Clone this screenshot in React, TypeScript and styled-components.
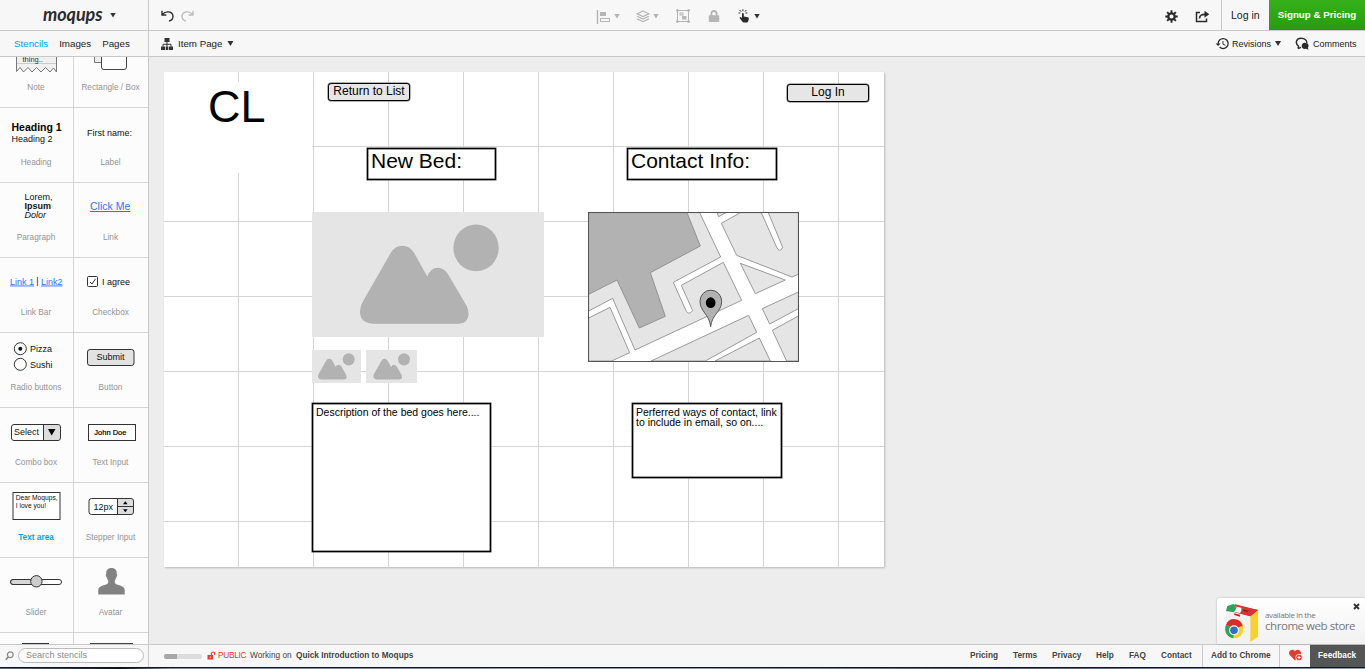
import React from 'react';
import styled, { createGlobalStyle } from 'styled-components';
import { FaLock, FaHeart } from 'react-icons/fa';
import { MdHistory } from 'react-icons/md';

const GlobalStyle = createGlobalStyle`
  * { box-sizing: border-box; }
  html, body { margin: 0; padding: 0; overflow: hidden; }
  body { font-family: "Liberation Sans", Arial, sans-serif; color: #333; }
`;

const line = '#c9c9c9';

const Screen = styled.div`
  width: 1365px;
  height: 669px;
  display: flex;
  flex-direction: column;
  background: #ededed;
  overflow: hidden;
  white-space: nowrap;
`;

const Bar = styled.header<{ $h: number }>`
  display: flex;
  flex: none;
  height: ${p => p.$h}px;
  background: #f7f7f7;
  border-bottom: 1px solid ${line};
`;

const SideCell = styled.div<{ $left: number; $gap?: number; $pb?: number }>`
  width: 149px;
  flex: none;
  display: flex;
  align-items: center;
  padding: 0 0 ${p => p.$pb ?? 0}px ${p => p.$left}px;
  gap: ${p => p.$gap ?? 0}px;
  border-right: 1px solid ${line};
`;

const Logo = styled.span`
  font-family: Lato, sans-serif;
  font-style: italic;
  font-weight: 700;
  font-size: 18px;
  line-height: 20px;
  letter-spacing: -0.05px;
  width: 67px;
  margin-top: -3px;
  color: #2b2b2b;
`;

const Caret = styled.i<{ $color?: string; $ml?: number }>`
  width: 6px;
  height: 5px;
  flex: none;
  margin-left: ${p => p.$ml ?? 0}px;
  background: ${p => p.$color ?? '#333'};
  clip-path: polygon(0 0, 100% 0, 50% 100%);
`;

const Tab = styled.span<{ $active?: boolean }>`
  font-size: 9.75px;
  color: ${p => (p.$active ? '#00a1df' : '#222')};
`;

const BarBody = styled.div<{ $left: number; $pb?: number }>`
  flex: 1;
  display: flex;
  align-items: center;
  padding: 0 0 ${p => p.$pb ?? 0}px ${p => p.$left}px;
`;

const Slot = styled.span<{ $w: number }>`
  width: ${p => p.$w}px;
  flex: none;
  display: flex;
  align-items: center;
`;

const ToolSlot = styled(Slot)`
  margin-top: 2px;
`;

const Spacer = styled.span`
  flex: 1;
`;

const Label = styled.span<{ $size: number; $ml?: number; $bold?: boolean; $color?: string; $track?: number }>`
  font-size: ${p => p.$size}px;
  margin-left: ${p => p.$ml ?? 0}px;
  font-weight: ${p => (p.$bold ? 700 : 400)};
  color: ${p => p.$color ?? '#222'};
  letter-spacing: ${p => p.$track ?? 0}px;
`;

const LoginCell = styled.div`
  width: 48px;
  height: 30px;
  display: flex;
  align-items: center;
  padding-left: 9px;
  border-left: 1px solid ${line};
  font-size: 10.5px;
  color: #222;
`;

const SignupButton = styled.div`
  width: 96px;
  height: 30px;
  display: flex;
  align-items: center;
  justify-content: center;
  padding-bottom: 2px;
  background: linear-gradient(#35b11a, #289b0e);
  color: #fff;
  font-size: 9.75px;
  font-weight: 700;
`;

const Main = styled.main`
  flex: none;
  height: 587px;
  display: flex;
`;

const Stencils = styled.aside`
  width: 149px;
  flex: none;
  border-right: 1px solid ${line};
  background: #fcfcfc;
  overflow: hidden;
`;

const StencilGrid = styled.div`
  display: grid;
  grid-template-columns: 74px 74px;
  grid-auto-rows: 75px;
  margin-top: -24px;
`;

const StencilCell = styled.div<{ $first: boolean }>`
  display: flex;
  flex-direction: column;
  border-bottom: 1px solid #d6d6d6;
  border-right: ${p => (p.$first ? '1px solid #d6d6d6' : '0')};
  svg {
    display: block;
    flex: none;
    overflow: visible;
  }
`;

const Caption = styled.span<{ $active?: boolean }>`
  font-size: 8.25px;
  line-height: 12px;
  margin-top: 4px;
  padding-right: 1px;
  text-align: center;
  font-weight: ${p => (p.$active ? 700 : 400)};
  color: ${p => (p.$active ? '#00a8e1' : '#949494')};
`;

const Workspace = styled.section`
  flex: 1;
  position: relative;
  padding: 15px;
`;

const Sheet = styled.div`
  position: relative;
  width: 720px;
  height: 495px;
  background-color: #fff;
  background-image: linear-gradient(to right, transparent 74px, #d5d5d5 74px),
    linear-gradient(to bottom, transparent 74px, #d5d5d5 74px);
  background-size: 75px 75px;
  box-shadow: 1px 1px 2px rgba(0, 0, 0, 0.22);
`;

/* An item dropped on the free canvas, placed by its own coordinates. */
const Item = styled.div<{ $x: number; $y: number; $w: number; $h: number }>`
  position: absolute;
  left: ${p => p.$x}px;
  top: ${p => p.$y}px;
  width: ${p => p.$w}px;
  height: ${p => p.$h}px;
  color: #000;
  svg { display: block; }
`;

const TitleItem = styled(Item)`
  background: #fff;
  font-size: 45px;
  line-height: 49px;
  padding-left: 44px;
`;

const ButtonItem = styled(Item)`
  background: #e6e6e6;
  border: 1.5px solid #000;
  box-shadow: 0 0 0 0.5px rgba(0, 0, 0, 0.6);
  border-radius: 3px;
  font-size: 12px;
  line-height: 15px;
  text-align: center;
`;

const BoxItem = styled(Item)<{ $size: number; $lh: number }>`
  background: #fff;
  border: 1px solid #000;
  box-shadow: inset 0 0 0 0.5px #444, 0 0 0 0.5px #444;
  font-size: ${p => p.$size}px;
  line-height: ${p => p.$lh}px;
  padding: 3px 0 0 3px;
  white-space: pre;
`;

const Promo = styled.div`
  position: absolute;
  right: 0;
  bottom: 0;
  width: 148px;
  height: 46px;
  display: flex;
  padding: 5px 0 0 8px;
  background: linear-gradient(#fff, #f1f1f1);
  border-radius: 3px 0 0 0;
  box-shadow: 0 0 2px rgba(0, 0, 0, 0.3);
  font-family: "Open Sans", sans-serif;
  color: #777;
`;

const PromoText = styled.div`
  display: flex;
  flex-direction: column;
  padding: 6px 0 0 6px;
`;

const PromoLine = styled.span<{ $size: number; $lh: number; $track: number }>`
  font-size: ${p => p.$size}px;
  line-height: ${p => p.$lh}px;
  letter-spacing: ${p => p.$track}px;
`;

const CloseMark = styled.div`
  position: absolute;
  right: 5px;
  top: 5px;
  svg { display: block; }
`;

const Footer = styled.footer`
  flex: none;
  height: 23px;
  display: flex;
  align-items: stretch;
  background: #f7f7f7;
  border-top: 1px solid ${line};
`;

const SearchBox = styled.div`
  width: 126px;
  height: 15px;
  margin-left: 4px;
  padding-left: 7px;
  border: 1px solid #bbb;
  border-radius: 8px;
  background: #fff;
  font-size: 9px;
  line-height: 13px;
  color: #8a8a8a;
`;

const Progress = styled.span`
  width: 38px;
  height: 5px;
  margin-top: 2px;
  border-radius: 2px;
  background: linear-gradient(to right, #a8a8a8 13px, #dcdcdc 13px);
`;

const FooterCell = styled.span<{ $w: number; $pl?: number; $line?: boolean; $dark?: boolean }>`
  width: ${p => p.$w}px;
  display: flex;
  align-items: center;
  padding: 0 0 2px ${p => p.$pl ?? 0}px;
  font-size: 8.25px;
  font-weight: 700;
  color: ${p => (p.$dark ? '#fff' : '#444')};
  background: ${p => (p.$dark ? '#555' : 'transparent')};
  border-left: ${p => (p.$line ? `1px solid ${line}` : '0')};
`;

const DesktopEdge = styled.div`
  height: 2px;
  flex: none;
  border-top: 1px solid #10141c;
  background: linear-gradient(to right, #5b6f8c, #0c0f16 120px, #7d8ca3 170px, #8798ae 700px, #4d5f7a 1000px, #8c9cb2);
`;

const ink = { stroke: '#333', strokeWidth: 1, fill: 'none' } as const;
const sm = { fontSize: 9, fill: '#111' } as const;
const linkBlue = '#2f74ee';

interface Stencil {
  name?: string;
  active?: boolean;
  art: React.ReactNode;
}

const stencils: Stencil[] = [
  {
    name: 'Note',
    art: (
      <>
        <path d="M16.5 0V38.500L20 34.500L23.500 39L28 34.500L32 39L36.500 34.500L41 39L45.500 34.500L50 39L53.500 35L56.500 39V0Z" fill="#f0f0f0" stroke="#777" />
        <path d="M17 30.500H56" stroke="#ccc" />
        <text x="22.500" y="29" fontSize="7.500" fill="#333">thing..</text>
      </>
    ),
  },
  {
    name: 'Rectangle / Box',
    art: (
      <>
        <path d="M20.500 0V29.500H30V0Z" fill="#eee" stroke="#777" />
        <rect x="27.500" y="10" width="25" height="26.500" rx="2.500" fill="#fff" stroke="#444" />
      </>
    ),
  },
  {
    name: 'Heading',
    art: (
      <>
        <text x="11.500" y="23" fontSize="10.500" fontWeight="700" fill="#000">Heading 1</text>
        <text x="11.500" y="33.500" {...sm}>Heading 2</text>
      </>
    ),
  },
  { name: 'Label', art: <text x="13" y="27.500" {...sm}>First name:</text> },
  {
    name: 'Paragraph',
    art: (
      <>
        <text x="24.500" y="17" {...sm}>Lorem,</text>
        <text x="24.500" y="26" {...sm} fontWeight="700">Ipsum</text>
        <text x="24.500" y="35" {...sm} fontStyle="italic">Dolor</text>
      </>
    ),
  },
  { name: 'Link', art: <text x="16" y="27" fontSize="10.500" fill={linkBlue} textDecoration="underline">Click Me</text> },
  {
    name: 'Link Bar',
    art: (
      <>
        <text x="10" y="26.500" fontSize="9" fill={linkBlue} textDecoration="underline">Link 1</text>
        <text x="36.300" y="26" {...sm}>|</text>
        <text x="41" y="26.500" fontSize="9" fill={linkBlue} textDecoration="underline">Link2</text>
      </>
    ),
  },
  {
    name: 'Checkbox',
    art: (
      <>
        <rect x="13.500" y="18.500" width="10" height="10" rx="1" {...ink} fill="#fff" />
        <path d="M16 24L18 26L21.500 20.800" {...ink} />
        <text x="28" y="27" {...sm}>I agree</text>
      </>
    ),
  },
  {
    name: 'Radio buttons',
    art: (
      <>
        <circle cx="20.300" cy="15.700" r="6" {...ink} fill="#fff" />
        <circle cx="20.300" cy="15.700" r="2" fill="#111" />
        <circle cx="20.300" cy="31.300" r="6" {...ink} fill="#fff" />
        <text x="30" y="19" {...sm}>Pizza</text>
        <text x="30" y="34.700" {...sm}>Sushi</text>
      </>
    ),
  },
  {
    name: 'Button',
    art: (
      <>
        <rect x="13.500" y="16.500" width="46.500" height="16" rx="2.500" {...ink} fill="#e2e2e2" />
        <text x="22.500" y="27" {...sm}>Submit</text>
      </>
    ),
  },
  {
    name: 'Combo box',
    art: (
      <>
        <rect x="11.500" y="16.500" width="49" height="16" rx="2.500" fill="#fff" />
        <path d="M43.500 16.500H58L60.500 19V30L58 32.500H43.500Z" fill="#ddd" />
        <rect x="11.500" y="16.500" width="49" height="16" rx="2.500" {...ink} />
        <path d="M43.500 16.500V32.500" {...ink} />
        <text x="14" y="27" {...sm}>Select</text>
        <path d="M48 21H55.500L51.700 27.500Z" fill="#000" />
      </>
    ),
  },
  {
    name: 'Text Input',
    art: (
      <>
        <rect x="14.500" y="16.500" width="47" height="16" {...ink} fill="#fff" />
        <text x="20.300" y="27" fontSize="7.500" fill="#000" stroke="#000" strokeWidth=".2">John Doe</text>
      </>
    ),
  },
  {
    name: 'Text area',
    active: true,
    art: (
      <>
        <rect x="13" y="9.500" width="47" height="27" {...ink} fill="#fff" />
        <text x="15.700" y="17" fontSize="6.700" fill="#111">Dear Moqups,</text>
        <text x="15.700" y="25" fontSize="6.700" fill="#111">I love you!</text>
      </>
    ),
  },
  {
    name: 'Stepper Input',
    art: (
      <>
        <rect x="15" y="15.500" width="44.500" height="16" rx="2.500" fill="#fff" />
        <path d="M43.500 15.500H57L59.500 18V29L57 31.500H43.500Z" fill="#ddd" />
        <rect x="15" y="15.500" width="44.500" height="16" rx="2.500" {...ink} />
        <path d="M43.500 15.500V31.500M43.500 23.500H59.500" {...ink} />
        <text x="19.500" y="26.500" {...sm}>12px</text>
        <path d="M49 21.200H53.600L51.300 18.200ZM49 26.200H53.600L51.300 29.200Z" fill="#000" />
      </>
    ),
  },
  {
    name: 'Slider',
    art: (
      <>
        <rect x="10.500" y="21.500" width="51" height="5" rx="2.500" {...ink} fill="#fff" />
        <path d="M13 21.500H36V26.500H13Q10.500 26 10.500 24T13 21.500Z" {...ink} fill="#d6d6d6" />
        <circle cx="36.400" cy="23.300" r="5.700" {...ink} fill="#ccc" />
      </>
    ),
  },
  {
    name: 'Avatar',
    art: (
      <path
        d="M37.500 10C41.500 10 43 12.500 42.700 16C43.800 16.500 43 19 42.200 19.500C41.800 21 41.300 21.800 40.800 22.400V25C42 27.500 50.700 27 50.700 32V36.500H24.300V32C24.300 27 33 27.500 34.200 25V22.400C33.700 21.800 33.200 21 32.800 19.500C32 19 31.200 16.500 32.300 16C32 12.500 33.500 10 37.500 10Z"
        fill="#828282"
      />
    ),
  },
  { art: <rect x="22.500" y="10.500" width="26" height="20" {...ink} /> },
  { art: <rect x="16" y="10" width="43" height="20" fill="#444" /> },
];

const scenery = (
  <>
    <path
      d="M272 160Q285 138 307 138Q329 138 343 160L382 230Q393 204 413 204Q432 204 444 223L500 318Q506 330 506 345Q504 370 478 372H222Q180 370 180 335Q180 320 190 303Z"
      fill="#b2b2b2"
    />
    <ellipse cx="528.500" cy="144.500" rx="68" ry="70" fill="#b2b2b2" />
  </>
);

const Placeholder = ({ w, h, view }: { w: number; h: number; view: string }) => (
  <svg width={w} height={h} viewBox={view} preserveAspectRatio="none">
    <rect x="-10" y="-10" width="900" height="900" fill="#e5e5e5" />
    {scenery}
  </svg>
);

const StreetMap = () => (
  <svg width="211" height="150" viewBox="24 426 633 450">
    <rect x="25.500" y="427.500" width="630" height="446" fill="#fff" />
    <g fill="#e5e5e5" stroke="#888" strokeWidth="2.500">
      <path d="M26 428H359L422 561L280 637L319 724Q327 736 338 722L304 646L430 577L485 691L165 840L98 685L26 723Z" />
      <path d="M26 744L90 712L149 848L95 873H26Z" />
      <path d="M213 873L506 736L530 787L376 873Z" />
      <path d="M405 873L538 804L571 873Z" />
      <path d="M411 428L416 440L438 428Z" />
      <path d="M424 460L481 428H544L590 532Q600 550 608 532L565 428H655V613L636 621L470 556Z" />
      <path d="M481 580L616 630L526 671Z" />
      <path d="M547 716L655 666V716L569 762Z" />
      <path d="M577 781L655 738V873H620Z" />
      <path d="M26 428H321L361 528L211 608L256 739L178 774L111 630L26 673Z" fill="#b2b2b2" />
    </g>
    <path d="M392 770C388 732 360 725 360 694A32 33 0 0 1 425 694C425 725 396 732 392 770Z" fill="#b2b2b2" stroke="#555" strokeWidth="3" />
    <ellipse cx="392" cy="698" rx="14.500" ry="16" fill="#000" />
    <rect x="25.500" y="427.500" width="630" height="447" fill="none" stroke="#555" strokeWidth="3" />
  </svg>
);

const TurnArrow = ({ color, flip }: { color: string; flip?: boolean }) => (
  <svg width="13" height="12" viewBox="482 30 39 36" fill="none" stroke={color} strokeWidth="4">
    <g transform={flip ? 'translate(1003 0) scale(-1 1)' : undefined}>
      <path d="M485 32V45H498M486 43C496 32 517 33 518 49C518 57 513 62 506 63" />
    </g>
  </svg>
);

const AlignIcon = () => (
  <svg width="14" height="15" viewBox="0 0 14 15">
    <path d="M1.500 1V15" stroke="#b5b5b5" strokeWidth="1.500" />
    <rect x="4" y="3" width="6" height="4" fill="#b5b5b5" />
    <rect x="4.500" y="9.500" width="9" height="3" fill="none" stroke="#b5b5b5" />
  </svg>
);

const LayersIcon = () => (
  <svg width="14" height="13" viewBox="0 0 14 13" fill="none" stroke="#b5b5b5" strokeWidth="1.200">
    <path d="M7 1L12.800 3.800L7 6.600L1.200 3.800ZM1.200 6.300L7 9.100L12.800 6.300M1.200 8.900L7 11.700L12.800 8.900" />
  </svg>
);

const GroupIcon = () => (
  <svg width="14" height="14" viewBox="0 0 14 14" fill="none" stroke="#b5b5b5">
    <rect x="1.500" y="1.500" width="11" height="11" />
    <path d="M0 1.500H3M1.500 0V3M11 1.500H14M12.500 0V3M0 12.500H3M1.500 11V14M11 12.500H14M12.500 11V14" strokeWidth="1.400" />
    <rect x="4" y="4" width="3" height="2" />
    <rect x="6.500" y="7.500" width="3.500" height="2.500" fill="#b5b5b5" />
  </svg>
);

const TapIcon = () => (
  <svg width="12" height="14" viewBox="0 0 12 14">
    <path d="M4 4.500Q5 3.500 5.800 4.500V7.500L10 8.200Q11 8.500 10.800 10L10.300 12Q10 13.500 8.500 13.500H5.500Q4.300 13 3.500 11.500L1.600 9Q1.500 8 2.600 8L4 9Z" fill="#2b2b2b" />
    <path d="M0.500 4H2.300M1.500 1L3 2.600M4.900 0.300V2.200M8.300 1L7 2.600M9.300 4H7.500" stroke="#2b2b2b" fill="none" />
  </svg>
);

const GearIcon = () => (
  <svg width="13" height="13" viewBox="-6.5 -6.5 13 13" fill="none" stroke="#2b2b2b">
    <circle r="3.200" strokeWidth="2.300" />
    <path d="M0 -6.200V-3.500M0 6.200V3.500M-6.200 0H-3.500M6.200 0H3.500M-4.400 -4.400L-2.600 -2.600M4.400 4.400L2.600 2.600M-4.400 4.400L-2.600 2.600M4.400 -4.400L2.600 -2.600" strokeWidth="1.900" />
  </svg>
);

const ShareIcon = () => (
  <svg width="15" height="13" viewBox="0 0 15 13" fill="none" stroke="#2b2b2b" strokeWidth="1.500">
    <path d="M5 2.500H1.500V11.500H11.500V8.500" />
    <path d="M4.500 8.500C4.800 5 6.500 4.300 10 4.300" strokeWidth="1.700" />
    <path d="M9.500 0.800L14.300 4.300L9.500 7.800Z" fill="#2b2b2b" stroke="none" />
  </svg>
);

const SitemapIcon = () => (
  <svg width="12" height="12" viewBox="0 0 12 12">
    <path d="M3.500 0H8.500V4H3.500ZM0 8.500H4V12H0ZM8 8.500H12V12H8ZM4.700 8.500H7.300V12H4.700Z" fill="#333" />
    <path d="M6 4V8.500M2 8.500V6.300H10V8.500" stroke="#333" fill="none" />
  </svg>
);

const CommentsIcon = () => (
  <svg width="15" height="14" viewBox="0 0 15 14">
    <path d="M3 11.500L3.600 9.200C-0.500 6 1.500 1.200 6 1.200C10 1.200 12 3.500 11.800 6" fill="none" stroke="#2b2b2b" strokeWidth="1.400" />
    <path d="M3 11.700L6 10.300" stroke="#2b2b2b" strokeWidth="1.300" />
    <path d="M9.800 5.800C13.500 5.800 14.500 9 12.900 10.700L13.500 12.800L11 11.800C8 12.300 6.500 10.500 6.700 8.700C6.900 7 8 5.800 9.800 5.800Z" fill="#2b2b2b" />
  </svg>
);

const SearchIcon = () => (
  <svg width="9" height="10" viewBox="0 0 9 10" fill="none" stroke="#888">
    <circle cx="5.300" cy="3.800" r="2.900" strokeWidth="1.200" />
    <path d="M3.200 6L0.800 8.800" strokeWidth="1.700" />
  </svg>
);

const OpenLockIcon = () => (
  <svg width="9" height="9" viewBox="0 0 9 9">
    <rect x="0.500" y="4" width="5.500" height="4.500" fill="#e23c2c" />
    <path d="M4.500 4V2.500Q4.700 1 6.200 1Q7.700 1 7.700 2.500V4" fill="none" stroke="#e23c2c" strokeWidth="1.200" />
    <path d="M3.200 5.500V7" stroke="#fff" strokeWidth=".8" />
  </svg>
);

const StoreBox = () => (
  <svg width="34" height="40" viewBox="225 38 102 120">
    <path d="M228 60L301 78V155L228 134Z" fill="#f1f1f1" />
    <path d="M301 78L324 60V139L301 155Z" fill="#fbd02c" />
    <path d="M228 62L232 47L250 41L262 47L252 66Z" fill="#2aa55a" />
    <path d="M243 43L324 59L301 78L252 66L264 52Z" fill="#d63434" />
    <path d="M250 44L282 51L270 68L252 65L262 52Z" fill="#f7f7f7" />
    <path d="M274 53L324 59L301 78L275 70Z" fill="#d63434" />
    <path d="M256 42L324 59L312 62L252 47Z" fill="#d63434" />
    <path d="M281 58L296 61L292 64L278 61Z" fill="#8e1515" />
    <path d="M253 69L270 73V79L253 74Z" fill="#c62323" />
    <g transform="translate(253 115)">
      <ellipse rx="27" ry="29" fill="#fbd02c" />
      <path d="M0 0L-25 -12A27 29 0 0 1 25 -9Z" fill="#d92b2b" />
      <path d="M0 0L-25 -12A27 29 0 0 0 -3 29Z" fill="#2aa55a" />
      <circle cx="-1" cy="5" r="15" fill="#fff" />
      <circle cx="-1" cy="5" r="11.500" fill="#2f6fc4" />
    </g>
  </svg>
);

const footerLinks: [string, number][] = [
  ['Pricing', 43],
  ['Terms', 39],
  ['Privacy', 44],
  ['Help', 33],
  ['FAQ', 32],
  ['Contact', 41],
];

export default function App() {
  return (
    <>
      <GlobalStyle />
      <Screen>
        <Bar $h={31}>
          <SideCell $left={43}>
            <Logo>moqups</Logo>
            <Caret />
          </SideCell>
          <BarBody $left={12}>
            <ToolSlot $w={20}><TurnArrow color="#2b2b2b" /></ToolSlot>
            <ToolSlot $w={415}><TurnArrow color="#bdbdbd" flip /></ToolSlot>
            <ToolSlot $w={40}><AlignIcon /><Caret $color="#b5b5b5" $ml={4} /></ToolSlot>
            <ToolSlot $w={40}><LayersIcon /><Caret $color="#b5b5b5" $ml={3} /></ToolSlot>
            <ToolSlot $w={32}><GroupIcon /></ToolSlot>
            <ToolSlot $w={30}><FaLock size={12} color="#b5b5b5" /></ToolSlot>
            <ToolSlot $w={30}><TapIcon /><Caret $ml={4} /></ToolSlot>
            <Spacer />
            <ToolSlot $w={30}><GearIcon /></ToolSlot>
            <ToolSlot $w={26}><ShareIcon /></ToolSlot>
            <LoginCell>Log in</LoginCell>
            <SignupButton>Signup &amp; Pricing</SignupButton>
          </BarBody>
        </Bar>
        <Bar $h={26}>
          <SideCell $left={14} $gap={11}>
            <Tab $active>Stencils</Tab>
            <Tab>Images</Tab>
            <Tab>Pages</Tab>
          </SideCell>
          <BarBody $left={12}>
            <SitemapIcon />
            <Label $size={9.75} $ml={5}>Item Page</Label>
            <Caret $ml={5} />
            <Spacer />
            <Slot $w={80}>
              <MdHistory size={15} color="#2b2b2b" />
              <Label $size={9} $ml={2}>Revisions</Label>
              <Caret $ml={4} />
            </Slot>
            <Slot $w={70}>
              <CommentsIcon />
              <Label $size={9} $ml={3}>Comments</Label>
            </Slot>
          </BarBody>
        </Bar>
        <Main>
          <Stencils>
            <StencilGrid>
              {stencils.map((s, i) => (
                <StencilCell key={i} $first={i % 2 === 0}>
                  <svg width="73" height="45">{s.art}</svg>
                  {s.name && <Caption $active={s.active}>{s.name}</Caption>}
                </StencilCell>
              ))}
            </StencilGrid>
          </Stencils>
          <Workspace>
            <Sheet>
              <TitleItem $x={0} $y={10} $w={148} $h={91}>CL</TitleItem>
              <ButtonItem $x={164} $y={11} $w={82} $h={18}>Return to List</ButtonItem>
              <ButtonItem $x={623} $y={12} $w={82} $h={18}>Log In</ButtonItem>
              <BoxItem $x={203} $y={76} $w={129} $h={32} $size={21} $lh={18}>New Bed:</BoxItem>
              <BoxItem $x={463} $y={76} $w={150} $h={32} $size={21} $lh={18}>Contact Info:</BoxItem>
              <Item $x={148} $y={140} $w={232} $h={125}>
                <Placeholder w={231.5} h={124.5} view="36 37 695 373" />
              </Item>
              <Item $x={148} $y={278} $w={49} $h={33}>
                <Placeholder w={48.7} h={33} view="111.7 39 553 372" />
              </Item>
              <Item $x={202.3} $y={278} $w={51} $h={33}>
                <Placeholder w={50.7} h={33} view="96.6 39 576 372" />
              </Item>
              <Item $x={424} $y={140} $w={211} $h={150}><StreetMap /></Item>
              <BoxItem $x={148} $y={331} $w={179} $h={149} $size={10.5} $lh={10}>Description of the bed goes here....</BoxItem>
              <BoxItem $x={468} $y={331} $w={150} $h={75} $size={10.5} $lh={10}>{'Perferred ways of contact, link\nto include in email, so on....'}</BoxItem>
            </Sheet>
            <Promo>
              <StoreBox />
              <PromoText>
                <PromoLine $size={8} $lh={11} $track={-0.35}>available in the</PromoLine>
                <PromoLine $size={11.5} $lh={12} $track={-0.45}>chrome web store</PromoLine>
              </PromoText>
              <CloseMark>
                <svg width="7" height="7" viewBox="0 0 7 7">
                  <path d="M1 1L6 6M6 1L1 6" stroke="#333" strokeWidth="1.900" />
                </svg>
              </CloseMark>
            </Promo>
          </Workspace>
        </Main>
        <Footer>
          <SideCell $left={5} $pb={1}>
            <SearchIcon />
            <SearchBox>Search stencils</SearchBox>
          </SideCell>
          <BarBody $left={15} $pb={2}>
            <Slot $w={43}><Progress /></Slot>
            <Slot $w={11}><OpenLockIcon /></Slot>
            <Slot $w={32}><Label $size={8.25} $color="#e23c2c" $track={-0.25}>PUBLIC</Label></Slot>
            <Slot $w={46}><Label $size={8.25} $color="#444">Working on</Label></Slot>
            <Label $size={8.25} $bold $color="#444">Quick Introduction to Moqups</Label>
          </BarBody>
          {footerLinks.map(([name, w]) => (
            <FooterCell key={name} $w={w}>{name}</FooterCell>
          ))}
          <FooterCell $w={77} $pl={8} $line>Add to Chrome</FooterCell>
          <FooterCell $w={31} $pl={9} $line>
            <svg width="15" height="13" viewBox="0 0 15 13">
              <FaHeart x="0" y="0" size={12} color="#e23c2c" />
              <circle cx="10" cy="8.500" r="3.300" fill="#e23c2c" stroke="#f7f7f7" strokeWidth=".8" />
              <path d="M10 6.800V10.200M8.300 8.500H11.700" stroke="#fff" />
            </svg>
          </FooterCell>
          <FooterCell $w={55} $pl={8} $dark>Feedback</FooterCell>
        </Footer>
        <DesktopEdge />
      </Screen>
    </>
  );
}
